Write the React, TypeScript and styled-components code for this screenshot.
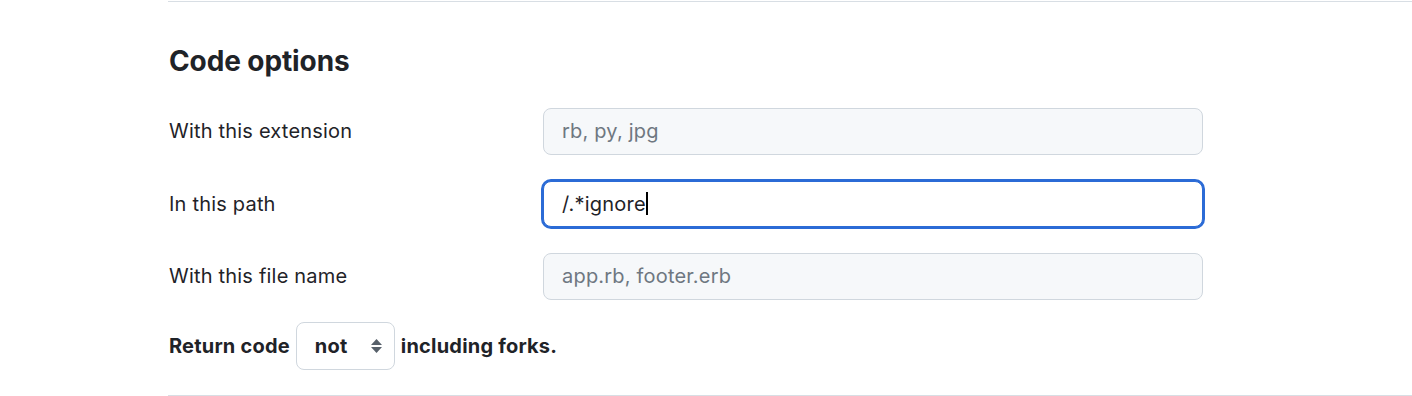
import React from 'react';
import styled, { createGlobalStyle } from 'styled-components';

const GlobalStyle = createGlobalStyle`
  body {
    margin: 0;
    background: #ffffff;
    color: #1f2328;
    font-family: Inter, "Liberation Sans", Arial, sans-serif;
  }
`;

const Section = styled.section`
  margin-top: 1px;
  margin-left: 168px;
  height: 395px;
  border-top: 1px solid #d8dee4;
  border-bottom: 1px solid #d8dee4;
  padding-top: 42px;
  box-sizing: border-box;
`;

const Heading = styled.h2`
  margin: 0 0 29px 1px;
  font-size: 28px;
  line-height: 35px;
  font-weight: 700;
  letter-spacing: -0.1px;
`;

const FormGrid = styled.div`
  display: grid;
  grid-template-columns: 375px 660px;
  row-gap: 26px;
  align-items: center;
`;

const Label = styled.label`
  padding-left: 1px;
  font-size: 20px;
  letter-spacing: 0.2px;
  line-height: 24px;
  color: #1f2328;
`;

const Field = styled.div<{ $focused?: boolean }>`
  height: 46.5px;
  box-sizing: border-box;
  display: flex;
  align-items: center;
  padding: 0 18px;
  font-size: 20px;
  letter-spacing: 0.2px;
  border-radius: 8px;
  border: 1px solid ${p => (p.$focused ? '#2b6bd6' : '#d0d7de')};
  background: ${p => (p.$focused ? '#ffffff' : '#f6f8fa')};
  box-shadow: ${p => (p.$focused ? '0 0 0 2px #2b6bd6' : 'none')};
  color: #1f2328;
`;

const Placeholder = styled.span`
  color: #6e7781;
`;

const Caret = styled.span`
  display: inline-block;
  width: 2px;
  height: 23px;
  background: #000;
`;

const ReturnRow = styled.div`
  display: flex;
  align-items: center;
  gap: 6px;
  margin-top: 22px;
  padding-left: 1px;
  font-size: 20px;
  letter-spacing: 0.2px;
  font-weight: 700;
`;

const SelectWrap = styled.div`
  position: relative;
  width: 99px;
  height: 48px;
`;

const Select = styled.select`
  appearance: none;
  width: 100%;
  height: 100%;
  box-sizing: border-box;
  padding: 0 0 0 18px;
  border: 1px solid #d0d7de;
  border-radius: 8px;
  background: #ffffff;
  font-family: inherit;
  font-size: 20px;
  letter-spacing: 0.2px;
  font-weight: 700;
  color: #1f2328;
`;

const Arrows = styled.svg`
  position: absolute;
  right: 12px;
  top: 16px;
  pointer-events: none;
`;

const fields = [
  { label: 'With this extension', placeholder: 'rb, py, jpg' },
  { label: 'In this path', value: '/.*ignore', focused: true },
  { label: 'With this file name', placeholder: 'app.rb, footer.erb' },
];

const App: React.FC = () => (
  <>
    <GlobalStyle />
    <Section>
      <Heading>Code options</Heading>
      <FormGrid>
        {fields.map(f => (
          <React.Fragment key={f.label}>
            <Label>{f.label}</Label>
            <Field $focused={f.focused}>
              {f.value ? (
                <>
                  {f.value}
                  <Caret />
                </>
              ) : (
                <Placeholder>{f.placeholder}</Placeholder>
              )}
            </Field>
          </React.Fragment>
        ))}
      </FormGrid>
      <ReturnRow>
        <span>Return code</span>
        <SelectWrap>
          <Select defaultValue="not">
            <option value="not">not</option>
            <option value="">&nbsp;</option>
          </Select>
          <Arrows width="13" height="16" viewBox="0 0 13 16">
            <path d="M6.5 1 L12 7 H1 Z" fill="#57606a" />
            <path d="M6.5 15 L1 9 H12 Z" fill="#57606a" />
          </Arrows>
        </SelectWrap>
        <span>including forks.</span>
      </ReturnRow>
    </Section>
  </>
);

export default App;
